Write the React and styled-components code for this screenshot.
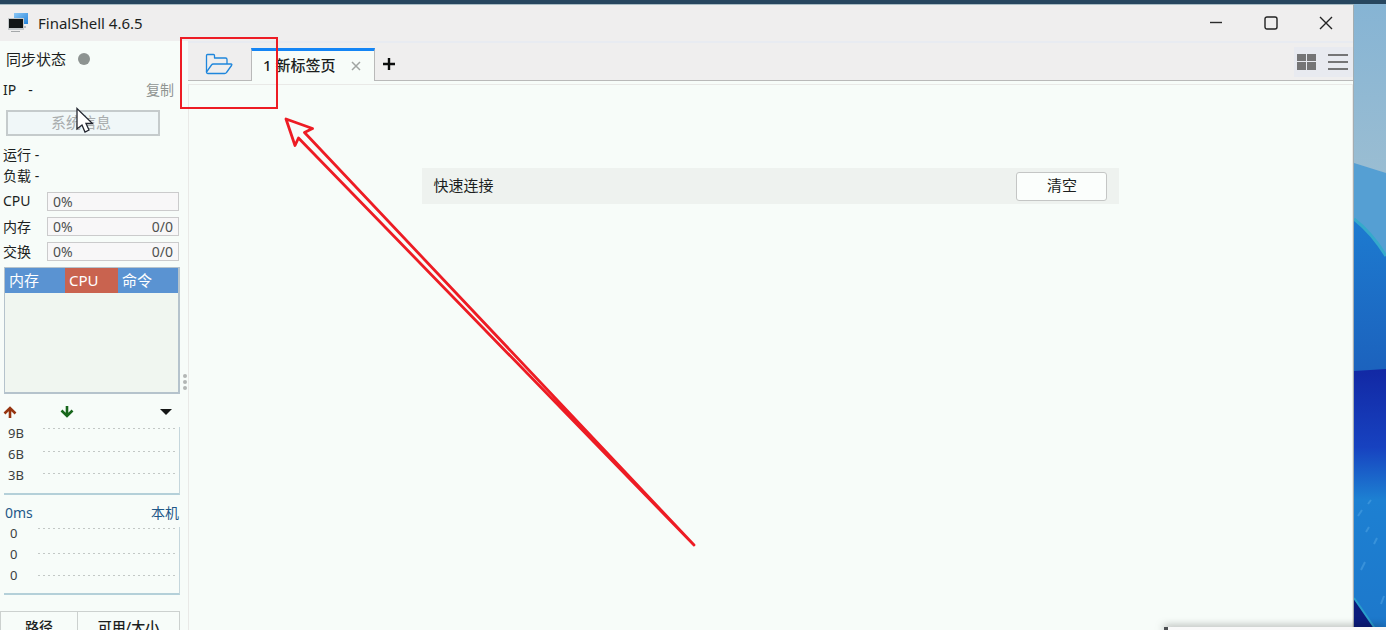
import React from 'react';
import styled, { createGlobalStyle } from 'styled-components';

const GlobalStyle = createGlobalStyle`
  * {
    box-sizing: border-box;
  }

  body {
    margin: 0;
    font-family: 'Noto Sans', 'Noto Sans CJK SC', sans-serif;
    font-size: 14px;
    color: #1c1f1e;
  }

  button {
    font: inherit;
    color: inherit;
    padding: 0;
    border: none;
    background: none;
    cursor: pointer;
  }

  svg {
    display: block;
  }
`;

const Desktop = styled.div`
  position: relative;
  display: flex;
  height: 100vh;
  padding-top: 4px;
  overflow: hidden;
  background: #27465f;
`;

const Window = styled.div`
  flex: 1;
  min-width: 0;
  display: flex;
  flex-direction: column;
  background: #f7fcf9;
  border-top: 1px solid #a9bcc4;
  border-right: 1px solid #a3adb1;
`;

const Wallpaper = styled.svg`
  flex: none;
  width: 32px;
  height: 100%;
`;

const TitleBar = styled.header`
  flex: none;
  display: flex;
  align-items: center;
  height: 36px;
  padding: 0 17px 0 8px;
  background: #efeeee;
`;

const Title = styled.h1`
  flex: 1;
  margin: 0 0 0 9px;
  font-size: 15px;
  font-weight: 400;
`;

const WindowButtons = styled.div`
  display: flex;
  gap: 35px;
`;

const IconButton = styled.button`
  display: flex;
  align-items: center;
  justify-content: center;
  width: 20px;
  height: 20px;
`;

const Body = styled.div`
  flex: 1;
  min-height: 0;
  display: flex;
`;

const Sidebar = styled.aside`
  flex: none;
  display: flex;
  flex-direction: column;
  width: 182px;
  overflow: hidden;
`;

const SyncRow = styled.div`
  flex: none;
  display: flex;
  align-items: center;
  gap: 12px;
  height: 36px;
  padding-left: 6px;
  font-size: 15px;
  line-height: 20px;
`;

const Dot = styled.span`
  width: 12px;
  height: 12px;
  border-radius: 50%;
  background: #8d9391;
`;

const IpRow = styled.div`
  flex: none;
  display: flex;
  align-items: center;
  gap: 12px;
  height: 26px;
  padding: 0 8px 2px 3px;
`;

const CopyButton = styled.button`
  margin-left: auto;
  color: #8f9492;
`;

const InfoButton = styled.button`
  flex: none;
  width: 154px;
  height: 26px;
  margin: 7px 0 9px 6px;
  padding: 0 4px 2px 0;
  border: 2px solid #c5cbcc;
  background: #f0f7f8;
  color: #a9adae;
  font-size: 15px;
  line-height: 20px;
`;

const StatLine = styled.div`
  flex: none;
  height: 21px;
  padding-left: 3px;
  line-height: 19px;
`;

const Meters = styled.div`
  flex: none;
  margin: 2px 0 3px;
`;

const MeterRow = styled.div`
  display: flex;
  align-items: center;
  height: 25px;
  padding: 0 3px;
`;

const MeterLabel = styled.span`
  width: 44px;
  padding-bottom: 2px;
`;

const Meter = styled.div`
  flex: 1;
  display: flex;
  justify-content: space-between;
  height: 19px;
  padding: 0 5px;
  border: 1px solid #cbcbcc;
  background: #f8f7f8;
  color: #4e5150;
  line-height: 17px;
`;

const ProcessBox = styled.div`
  flex: none;
  height: 127px;
  margin: 0 2px 0 4px;
  border: 1px solid #b5c3cc;
  border-width: 1px 2px 2px 1px;
  background: #f0f6f0;
`;

const ProcessTable = styled.table`
  width: 100%;
  border-collapse: collapse;
  table-layout: fixed;
`;

const ProcessHead = styled.th`
  width: ${({ $width }) => $width || 'auto'};
  height: 25px;
  padding: 0 0 2px 4px;
  background: ${({ $hot }) => ($hot ? '#c9634f' : '#5a93d2')};
  color: #fff;
  font-size: 15px;
  font-weight: 400;
  line-height: 20px;
  text-align: left;
`;

const NetHeader = styled.div`
  flex: none;
  display: flex;
  align-items: center;
  height: 24px;
  margin-top: 6px;
  padding: 0 10px 0 3px;
`;

const DownArrow = styled.svg`
  margin: 0 auto 0 43px;
`;

const PingHeader = styled.div`
  flex: none;
  display: flex;
  align-items: center;
  justify-content: space-between;
  height: 20px;
  margin-top: 8px;
  padding: 0 3px 2px 5px;
  color: #1f5888;
`;

const ChartBox = styled.div`
  flex: none;
  display: flex;
  height: 68px;
  margin: ${({ $top }) => $top}px 2px 0 4px;
  border-right: 1px solid #c5d6dc;
  border-bottom: 2px solid #b4d0d9;
`;

const ChartLabels = styled.div`
  display: flex;
  flex-direction: column;
  justify-content: space-between;
  width: ${({ $width }) => $width}px;
  height: 55px;
  padding-left: ${({ $indent }) => $indent}px;
  color: #3c403f;
  font-size: 13px;
  line-height: 13px;
`;

const ChartLines = styled.svg`
  width: ${({ $width }) => $width}px;
  height: 50px;
`;

const DiskTable = styled.table`
  flex: none;
  width: 180px;
  margin-top: 16px;
  border-collapse: collapse;
  table-layout: fixed;
`;

const DiskHead = styled.th`
  width: ${({ $width }) => $width || 'auto'};
  height: 30px;
  padding: 0 0 2px;
  border: 1px solid #ccd1cf;
  font-weight: 500;
`;

const Splitter = styled.div`
  flex: none;
  display: flex;
  flex-direction: column;
  align-items: center;
  justify-content: flex-end;
  gap: 2px;
  width: 6px;
  height: 349px;
`;

const Grip = styled.span`
  width: 4px;
  height: 4px;
  border-radius: 50%;
  background: #b3b6b5;
`;

const Main = styled.main`
  flex: 1;
  min-width: 0;
  display: flex;
  flex-direction: column;
`;

const TabBar = styled.nav`
  flex: none;
  display: flex;
  align-items: stretch;
  height: 40px;
  background: #efeeee;
  border-top: 2px solid #e8ebf1;
`;

const FolderButton = styled.button`
  display: flex;
  align-items: center;
  justify-content: center;
  width: 63px;
  padding: 4px 2px 0 0;
  border-bottom: 1px solid #b9b9b9;
`;

const Tab = styled.div`
  display: flex;
  align-items: center;
  gap: 12px;
  width: 124px;
  margin-top: 5px;
  padding: 0 10px 0 11px;
  border: 1px solid #b9b9b9;
  border-top: 3px solid #1485f5;
  border-bottom: none;
  background: #f7fcf9;
`;

const TabTitle = styled.button`
  padding-bottom: 3px;
  font-size: 15px;
  font-weight: 500;
  line-height: 20px;
  white-space: nowrap;
`;

const TabActions = styled.div`
  flex: 1;
  display: flex;
  align-items: center;
  padding: 4px 0 0 4px;
  border-bottom: 1px solid #b9b9b9;
`;

const ViewButtons = styled.div`
  display: flex;
  align-items: center;
  gap: 11px;
  height: 30px;
  margin: -4px 0 0 auto;
  padding: 0 5px 0 3px;
  background: #e8eaf0;
`;

const Content = styled.section`
  flex: 1;
  margin-top: 3px;
  padding-top: 83px;
  border: 1px solid #e9e9e7;
  border-bottom: none;
`;

const QuickBar = styled.div`
  display: flex;
  align-items: center;
  justify-content: space-between;
  width: 60%;
  height: 36px;
  margin: 0 auto;
  padding: 0 12px;
  background: #eef2ef;
  font-size: 15px;
  line-height: 20px;
`;

const QuickTitle = styled.span`
  padding-bottom: 2px;
`;

const ClearButton = styled.button`
  width: 91px;
  height: 29px;
  padding-bottom: 2px;
  border: 1px solid #c4c6c5;
  border-radius: 3px;
  background: #fbfefc;
`;

const Popup = styled.div`
  position: absolute;
  right: 0;
  bottom: 0;
  width: 222px;
  height: 3px;
  border-left: 4px solid #4c4f52;
  background: #f9f9f9;
  box-shadow: 0 0 9px rgba(0, 0, 0, 0.6);
`;

const Annotation = styled.svg`
  position: absolute;
  top: 0;
  left: 0;
  pointer-events: none;
`;

const meters = [
  { label: 'CPU', percent: '0%', usage: '' },
  { label: '内存', percent: '0%', usage: '0/0' },
  { label: '交换', percent: '0%', usage: '0/0' },
];

const Chart = ({ labels, indent, labelWidth, top, lines }) => {
  const width = 172 - labelWidth;

  return (
    <ChartBox $top={top}>
      <ChartLabels $width={labelWidth} $indent={indent}>
        {labels.map((label, i) => (
          <span key={i}>{label}</span>
        ))}
      </ChartLabels>
      <ChartLines $width={width} viewBox={`0 0 ${width} 50`}>
        {lines.map((y) => (
          <line key={y} x1="0" x2={width} y1={y + 0.5} y2={y + 0.5} stroke="#c3c8c6" strokeDasharray="2 3" />
        ))}
      </ChartLines>
    </ChartBox>
  );
};

const App = () => (
  <>
    <GlobalStyle />
    <Desktop>
      <Window>
        <TitleBar>
          <svg width="21" height="21" viewBox="0 0 21 21">
            <defs>
              <linearGradient id="screen" x1="0" y1="0" x2="1" y2="1">
                <stop offset="0" stopColor="#8cc8f5" />
                <stop offset="1" stopColor="#2383dc" />
              </linearGradient>
            </defs>
            <rect x="6" y="0" width="14" height="11" fill="url(#screen)" />
            <path d="M14 13h4v2h-4z" fill="#b9bdc2" />
            <rect x="0" y="5" width="16" height="12" fill="#c4c8ca" />
            <rect x="1" y="6" width="14" height="9" fill="#111516" />
            <path d="M3 18h9v1H3z" fill="#a5a8aa" />
          </svg>
          <Title>FinalShell 4.6.5</Title>
          <WindowButtons>
            <IconButton aria-label="最小化">
              <svg width="14" height="14" viewBox="0 0 14 14">
                <path d="M1 6.500h12" stroke="#2b2b2b" strokeWidth="1.400" />
              </svg>
            </IconButton>
            <IconButton aria-label="最大化">
              <svg width="14" height="14" viewBox="0 0 14 14">
                <rect x="1" y="1" width="12" height="12" rx="2" fill="none" stroke="#222" strokeWidth="1.400" />
              </svg>
            </IconButton>
            <IconButton aria-label="关闭">
              <svg width="14" height="14" viewBox="0 0 14 14">
                <path d="M1 1l12 12M13 1L1 13" stroke="#222" strokeWidth="1.400" />
              </svg>
            </IconButton>
          </WindowButtons>
        </TitleBar>

        <Body>
          <Sidebar>
            <SyncRow>
              同步状态
              <Dot />
            </SyncRow>
            <IpRow>
              <span>IP</span>
              <span>-</span>
              <CopyButton>复制</CopyButton>
            </IpRow>
            <InfoButton>系统信息</InfoButton>
            <StatLine>运行 -</StatLine>
            <StatLine>负载 -</StatLine>

            <Meters>
              {meters.map(({ label, percent, usage }) => (
                <MeterRow key={label}>
                  <MeterLabel>{label}</MeterLabel>
                  <Meter>
                    <span>{percent}</span>
                    <span>{usage}</span>
                  </Meter>
                </MeterRow>
              ))}
            </Meters>

            <ProcessBox>
              <ProcessTable>
                <thead>
                  <tr>
                    <ProcessHead $width="60px">内存</ProcessHead>
                    <ProcessHead $width="53px" $hot>CPU</ProcessHead>
                    <ProcessHead>命令</ProcessHead>
                  </tr>
                </thead>
              </ProcessTable>
            </ProcessBox>

            <NetHeader>
              <svg width="14" height="14" viewBox="0 0 14 14">
                <path d="M7 13V3M1.500 8.500L7 3l5.500 5.500" fill="none" stroke="#96340f" strokeWidth="2.600" />
              </svg>
              <DownArrow width="14" height="14" viewBox="0 0 14 14">
                <path d="M7 1v10M1.500 5.500L7 11l5.500-5.500" fill="none" stroke="#17661b" strokeWidth="2.600" />
              </DownArrow>
              <svg width="12" height="6" viewBox="0 0 12 6">
                <path d="M0 0h12L6 6z" fill="#151716" />
              </svg>
            </NetHeader>
            <Chart labels={['9B', '6B', '3B']} indent={4} labelWidth={39} top={3} lines={[1, 24, 46]} />

            <PingHeader>
              <span>0ms</span>
              <span>本机</span>
            </PingHeader>
            <Chart labels={['0', '0', '0']} indent={6} labelWidth={34} top={4} lines={[1, 26, 48]} />

            <DiskTable>
              <thead>
                <tr>
                  <DiskHead $width="77px">路径</DiskHead>
                  <DiskHead>可用/大小</DiskHead>
                </tr>
              </thead>
            </DiskTable>
          </Sidebar>

          <Splitter>
            <Grip />
            <Grip />
            <Grip />
          </Splitter>

          <Main>
            <TabBar>
              <FolderButton aria-label="打开连接管理器">
                <svg width="28" height="22" viewBox="0 0 28 22" fill="none" stroke="#1f86dc" strokeWidth="1.300" strokeLinejoin="round">
                  <path d="M1.500 19V2.500Q1.500 1.500 2.500 1.500H8.500Q9.500 1.500 9.500 2.500V5H20.500Q22 5 22 6.500V11" />
                  <path d="M1.500 19L6.500 12Q7 11 8.500 11H26Q27.500 11 26.500 12.500L21.500 19.500Q21 20.500 19.500 20.500H3Q1.500 20.500 1.500 19Z" />
                </svg>
              </FolderButton>
              <Tab>
                <TabTitle>1 新标签页</TabTitle>
                <IconButton aria-label="关闭标签页">
                  <svg width="10" height="10" viewBox="0 0 10 10">
                    <path d="M1 1l8 8M9 1L1 9" stroke="#a0a4a2" strokeWidth="1.500" />
                  </svg>
                </IconButton>
              </Tab>
              <TabActions>
                <IconButton aria-label="新建标签页">
                  <svg width="14" height="14" viewBox="0 0 14 14">
                    <path d="M7 1v12M1 7h12" stroke="#0b0d0c" strokeWidth="2.400" />
                  </svg>
                </IconButton>
                <ViewButtons>
                  <IconButton aria-label="网格视图">
                    <svg width="20" height="18" viewBox="0 0 20 18" fill="#757576">
                      <path d="M0 1h9v7H0zM10 1h9v7h-9zM0 9h9v8H0zM10 9h9v8h-9z" />
                    </svg>
                  </IconButton>
                  <IconButton aria-label="菜单">
                    <svg width="20" height="18" viewBox="0 0 20 18">
                      <path d="M0 2h20M0 9h20M0 16h20" stroke="#757576" strokeWidth="2" />
                    </svg>
                  </IconButton>
                </ViewButtons>
              </TabActions>
            </TabBar>

            <Content>
              <QuickBar>
                <QuickTitle>快速连接</QuickTitle>
                <ClearButton>清空</ClearButton>
              </QuickBar>
            </Content>
          </Main>
        </Body>
      </Window>

      <Wallpaper viewBox="0 0 32 626" preserveAspectRatio="none">
        <defs>
          <linearGradient id="sky" x1="0" y1="0" x2="0" y2="1">
            <stop offset="0" stopColor="#86b4d4" />
            <stop offset="1" stopColor="#9abdd2" />
          </linearGradient>
          <linearGradient id="petal" x1="0" y1="0" x2="0" y2="1">
            <stop offset="0" stopColor="#1d7bd0" />
            <stop offset="1" stopColor="#1c62bd" />
          </linearGradient>
          <linearGradient id="deep" x1="0" y1="0" x2="0" y2="1">
            <stop offset="0" stopColor="#1228a4" />
            <stop offset="0.3" stopColor="#1742c0" />
            <stop offset="0.5" stopColor="#1d80d2" />
            <stop offset="1" stopColor="#1d78cb" />
          </linearGradient>
        </defs>
        <rect width="32" height="170" fill="url(#sky)" />
        <path d="M0 159L32 169V260H0Z" fill="#559fd3" />
        <path d="M0 215Q18 229 32 252V366L0 368Z" fill="url(#petal)" />
        <path d="M0 215Q18 229 32 252" fill="none" stroke="#35a9cb" strokeWidth="3" />
        <path d="M0 367L32 365V626H0Z" fill="url(#deep)" />
        <path d="M4 512l4-6M14 500l3-4M20 540l3-6M7 566l4-8M27 600l3-8M12 528l3-5" stroke="#4aa0e2" strokeWidth="2" opacity="0.6" />
        <path d="M0 594L22 626H0Z" fill="#0c1c7c" />
        <path d="M0 594L22 626" stroke="#2a9ecb" strokeWidth="2" />
      </Wallpaper>

      <Popup />

      <Annotation width="720" height="560" viewBox="0 0 720 560" fill="none">
        <path d="M77 108.500v20.500l5-4 3 7 4-2-3-6.500h6.500z" fill="#fff" stroke="#22252f" strokeWidth="1.300" />
        <g stroke="#ed1c24" strokeLinejoin="round" strokeLinecap="round">
          <rect x="181" y="38" width="96" height="70" strokeWidth="2" strokeLinejoin="miter" />
          <path d="M694 545L304.500 132.500L312.500 128.500L286 119L295 145.500L298.500 138Z" strokeWidth="2.800" />
        </g>
      </Annotation>
    </Desktop>
  </>
);

export default App;
